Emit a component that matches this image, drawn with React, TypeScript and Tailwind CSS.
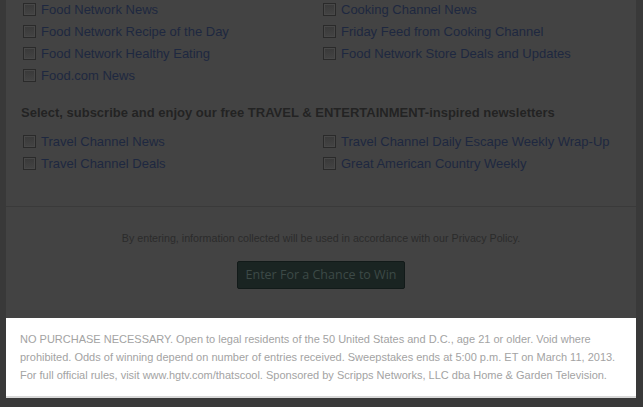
import React from "react";

const food: (string | null)[] = [
  "Food Network News",
  "Cooking Channel News",
  "Food Network Recipe of the Day",
  "Friday Feed from Cooking Channel",
  "Food Network Healthy Eating",
  "Food Network Store Deals and Updates",
  "Food.com News",
  null,
];

const travel = [
  "Travel Channel News",
  "Travel Channel Daily Escape Weekly Wrap-Up",
  "Travel Channel Deals",
  "Great American Country Weekly",
];

function Option({ label }: { label: string | null }) {
  if (!label) return <div className="h-[22px]" />;
  return (
    <label className="flex h-[22px] items-center gap-[5px]">
      <span className="block h-[13px] w-[13px] shrink-0 border border-[#2a2a2a] bg-gradient-to-b from-[#393939] to-[#444444] shadow-[inset_0_0_0_1px_#484848]" />
      <span className="text-[13px] leading-none text-[#1e2840]">{label}</span>
    </label>
  );
}

export default function App() {
  return (
    <div
      className="h-[407px] w-[643px] overflow-hidden bg-[#393939]"
      style={{ fontFamily: '"Liberation Sans", Arial, sans-serif' }}
    >
      <div className="mx-[6px] w-[630px] bg-[#434343]">
        {/* newsletters */}
        <div className="-mt-[2px] pl-[17px]">
          <div className="grid grid-cols-[300px_1fr]">
            {food.map((f, i) => (
              <Option key={i} label={f} />
            ))}
          </div>

          <h3 className="mt-[17px] -ml-[2px] text-[13px] font-bold leading-[20px] text-[#232323]">
            Select, subscribe and enjoy our free TRAVEL &amp; ENTERTAINMENT-inspired newsletters
          </h3>

          <div className="mt-[7px] grid grid-cols-[300px_1fr]">
            {travel.map((t) => (
              <Option key={t} label={t} />
            ))}
          </div>
        </div>

        <div className="mt-[32px] border-t border-[#3a3a3a]" />

        {/* submit */}
        <div className="flex flex-col items-center pb-[29px] pt-[24px]">
          <p className="text-[10.7px] leading-[14px] text-[#2b2b2b]">
            By entering, information collected will be used in accordance with our Privacy Policy.
          </p>
          <button
            className="mt-[16px] h-[28px] w-[168px] rounded-[2px] border border-[#121a19] bg-[#1a2422] text-[12.5px] text-[#3d4a47]"
            style={{ fontFamily: '"Open Sans", sans-serif' }}
          >
            Enter For a Chance to Win
          </button>
        </div>
      </div>

      {/* rules */}
      <div className="mx-[6px] w-[630px] border-b-2 border-[#d8d8d8] bg-white px-[14px] pb-[12px] pt-[12px]">
        <p className="text-[11px] leading-[18px] text-[#a3a3a3]">
          NO PURCHASE NECESSARY. Open to legal residents of the 50 United States and D.C., age 21 or older. Void where
          prohibited. Odds of winning depend on number of entries received. Sweepstakes ends at 5:00 p.m. ET on March 11,
          2013. For full official rules, visit www.hgtv.com/thatscool. Sponsored by Scripps Networks, LLC dba Home &amp;
          Garden Television.
        </p>
      </div>
    </div>
  );
}
